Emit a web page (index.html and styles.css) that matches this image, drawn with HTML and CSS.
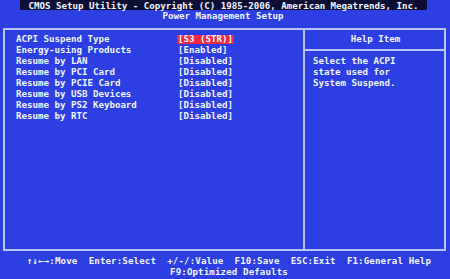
FILE: index.html
```html
<!DOCTYPE html>
<html lang="en">
<head>
  <meta charset="UTF-8">
  <title>CMOS Setup Utility</title>
  <link rel="stylesheet" href="styles.css">
</head>
<body>
<div class="screen">
  <div class="topbar">CMOS Setup Utility - Copyright (C) 1985-2006, American Megatrends, Inc.</div>
  <div class="subtitle">Power Management Setup</div>

  <div class="frame">
    <div class="settings">
      <div class="row"><span class="label">ACPI Suspend Type</span><span class="value selected">[S3 (STR)]</span></div>
      <div class="row"><span class="label">Energy-using Products</span><span class="value">[Enabled]</span></div>
      <div class="row"><span class="label">Resume by LAN</span><span class="value">[Disabled]</span></div>
      <div class="row"><span class="label">Resume by PCI Card</span><span class="value">[Disabled]</span></div>
      <div class="row"><span class="label">Resume by PCIE Card</span><span class="value">[Disabled]</span></div>
      <div class="row"><span class="label">Resume by USB Devices</span><span class="value">[Disabled]</span></div>
      <div class="row"><span class="label">Resume by PS2 Keyboard</span><span class="value">[Disabled]</span></div>
      <div class="row"><span class="label">Resume by RTC</span><span class="value">[Disabled]</span></div>
    </div>
    <div class="help">
      <div class="help-title">Help Item</div>
      <div class="help-body">Select the ACPI<br>state used for<br>System Suspend.</div>
    </div>
  </div>

  <div class="keys">
    <div class="keyline">↑↓←→:Move  Enter:Select  +/-/:Value  F10:Save  ESC:Exit  F1:General Help</div>
    <div class="keyline">F9:Optimized Defaults</div>
  </div>
</div>
</body>
</html>
```

FILE: styles.css
```css
body {
  margin: 0;
  background: #2b3fe2;
}
.screen {
  width: 450px;
  height: 279px;
  overflow: hidden;
  background: #2b3fe2;
  color: #f2f4ff;
  font-family: "DejaVu Sans Mono", "Liberation Mono", monospace;
  font-weight: bold;
  font-size: 9.15px;
  line-height: 11px;
}
.topbar {
  margin: 0 23px 0 20px;
  height: 10px;
  line-height: 12px;
  background: #0c0f33;
  text-align: center;
  white-space: nowrap;
}
.subtitle {
  margin-top: 1px;
  height: 11px;
  text-align: center;
  padding-right: 4px;
}
.frame {
  margin: 6px 4px 0 3px;
  height: 219px;
  border: 2px solid #b9c4f6;
  display: grid;
  grid-template-columns: 298px 1fr;
}
.settings {
  padding: 4px 0 0 11px;
}
.row {
  display: flex;
  align-items: center;
  height: 11px;
  white-space: nowrap;
}
.label {
  width: 162px;
}
.value {
  padding: 0 1px;
  margin-left: -1px;
}
.selected {
  background: #ee2a40;
  line-height: 9px;
  height: 9px;
}
.help {
  border-left: 2px solid #b9c4f6;
}
.help-title {
  height: 19px;
  line-height: 19px;
  border-bottom: 2px solid #b9c4f6;
  text-align: center;
  padding-left: 2px;
}
.help-body {
  padding: 5px 0 0 8px;
}
.keys {
  padding-top: 5px;
  text-align: center;
  padding-left: 8px;
  letter-spacing: 0.12px;
}
.keyline {
  white-space: pre;
}
```
